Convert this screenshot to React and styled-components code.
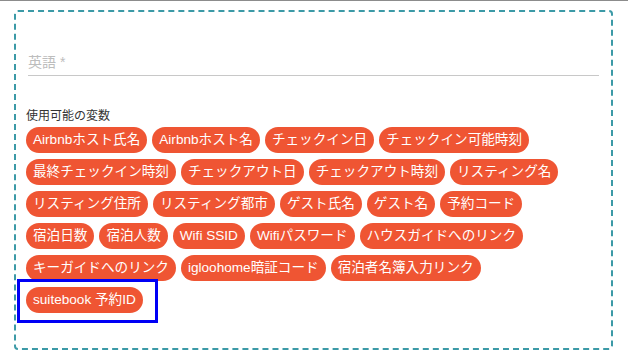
import React from 'react';
import styled, { createGlobalStyle } from 'styled-components';

const GlobalStyle = createGlobalStyle`
  body {
    margin: 0;
    background: #fff;
    font-family: "Liberation Sans", "Noto Sans CJK JP", sans-serif;
  }
`;

const Page = styled.div`
  box-sizing: border-box;
  height: 361px;
  border-top: 1px solid #8c8c8c;
  padding: 9px 15px 0 14px;
`;

const Card = styled.div`
  box-sizing: border-box;
  height: 340px;
  border: 2px dashed #3c9aa7;
  border-radius: 4px;
  padding: 0 10px;
`;

const Field = styled.div`
  margin: 40px 2px 0;
  padding-bottom: 3px;
  border-bottom: 1px solid #c8c8c8;
  font-size: 14px;
  line-height: 20px;
  color: #bdbdbd;
`;

const VarsLabel = styled.div`
  margin: 32px 0 3px;
  font-size: 12px;
  line-height: 16px;
  color: #333;
`;

const Chips = styled.div`
  display: flex;
  flex-wrap: wrap;
  gap: 6px 5px;
  padding-right: 14px;
`;

const Chip = styled.span`
  display: inline-block;
  height: 26px;
  line-height: 26px;
  padding: 0 7px;
  border-radius: 13px;
  background: #ef5533;
  color: #fff;
  font-size: 13.6px;
  white-space: nowrap;
`;

const Highlight = styled.span`
  position: relative;
  display: inline-block;

  &::after {
    content: '';
    position: absolute;
    top: -8px;
    left: -9px;
    right: -15px;
    bottom: -10px;
    border: 3px solid #0000f5;
    pointer-events: none;
  }
`;

const variables = [
  'Airbnbホスト氏名',
  'Airbnbホスト名',
  'チェックイン日',
  'チェックイン可能時刻',
  '最終チェックイン時刻',
  'チェックアウト日',
  'チェックアウト時刻',
  'リスティング名',
  'リスティング住所',
  'リスティング都市',
  'ゲスト氏名',
  'ゲスト名',
  '予約コード',
  '宿泊日数',
  '宿泊人数',
  'Wifi SSID',
  'Wifiパスワード',
  'ハウスガイドへのリンク',
  'キーガイドへのリンク',
  'igloohome暗証コード',
  '宿泊者名簿入力リンク',
];

const App = () => (
  <>
    <GlobalStyle />
    <Page>
      <Card>
        <Field>英語 *</Field>
        <VarsLabel>使用可能の変数</VarsLabel>
        <Chips>
          {variables.map((v) => (
            <Chip key={v}>{v}</Chip>
          ))}
          <Highlight>
            <Chip>suitebook 予約ID</Chip>
          </Highlight>
        </Chips>
      </Card>
    </Page>
  </>
);

export default App;
